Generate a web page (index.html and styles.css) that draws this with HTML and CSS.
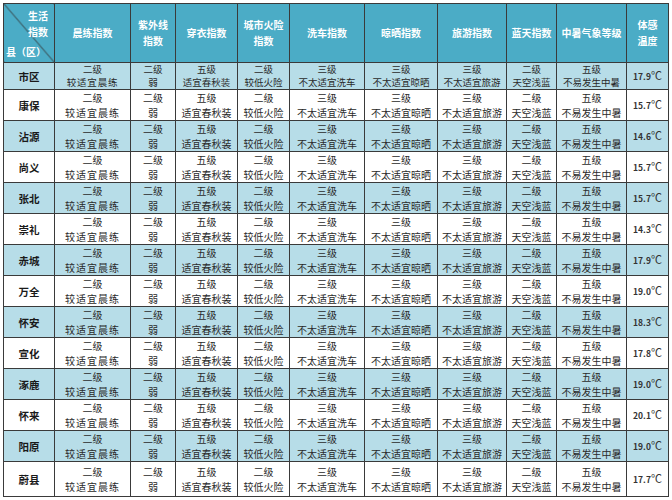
FILE: index.html
```html
<!DOCTYPE html>
<html lang="zh">
<head>
<meta charset="utf-8">
<title>生活指数</title>
<link rel="stylesheet" href="styles.css">
</head>
<body>
<table class="idx">
<colgroup>
<col class="c-name"><col class="c-cl"><col class="c-uv"><col class="c-cy"><col class="c-hx"><col class="c-xc"><col class="c-ls"><col class="c-ly"><col class="c-lt"><col class="c-zs"><col class="c-tg">
</colgroup>
<thead>
<tr class="head">
<th class="corner"><span class="corner-top">生活<br>指数</span><span class="corner-bot">县（区）</span></th>
<th>晨练指数</th>
<th>紫外线<br>指数</th>
<th>穿衣指数</th>
<th>城市火险<br>指数</th>
<th>洗车指数</th>
<th>晾晒指数</th>
<th>旅游指数</th>
<th>蓝天指数</th>
<th>中暑气象等级</th>
<th>体感<br>温度</th>
</tr>
</thead>
<tbody id="rows"></tbody>
</table>
<script src="app.js"></script>
</body>
</html>
```
FILE: styles.css
```css
html, body { margin: 0; padding: 0; background: #fff; }
body { padding: 3px 0 0 3px; font-family: "Noto Sans CJK SC", "Noto Sans", sans-serif; color: #2a2a2a; }
.idx { border-collapse: collapse; table-layout: fixed; width: 665px; }
.idx th, .idx td { border: 1px solid #3a3a3a; padding: 0; text-align: center; vertical-align: middle; }
.c-name { width: 51px; } .c-cl { width: 76px; } .c-uv { width: 45px; } .c-cy { width: 62px; }
.c-hx { width: 52px; } .c-xc { width: 75px; } .c-ls { width: 73px; } .c-ly { width: 69px; }
.c-lt { width: 50px; } .c-zs { width: 70px; } .c-tg { width: 42px; }
.head th { background: #4bacc6; color: #fff; font-weight: 700; font-size: 10px; line-height: 16px; height: 58px; }
.corner { position: relative; background: linear-gradient(to top right, #4bacc6 calc(50% - 0.7px), #333 50%, #4bacc6 calc(50% + 0.7px)) !important; }
.corner-top { position: absolute; right: 6px; top: 4px; text-align: right; }
.corner-bot { position: absolute; left: 2px; bottom: 2px; }
.idx td { font-size: 10px; line-height: 15px; height: 30px; }
.idx td .ln { display: block; }
.idx td.name { font-weight: 700; font-size: 10.5px; color: #1a1a1a; }
.idx tr.alt td { background: #b7dde8; }
.idx tr.first td { height: 26px; line-height: 13px; font-size: 9.5px; }
.idx tr.first td.name { font-size: 10.5px; }
.idx tr.last td { height: 34px; }
.idx td .wide { letter-spacing: 1px; }
.idx tr.first td .wide { letter-spacing: 0.8px; }
.idx td.temp { font-size: 8.5px; font-weight: 700; color: #333; }
.idx tr.first td.temp { font-size: 8.5px; }
.idx td.temp .deg { font-size: 11px; font-weight: 400; }
```
FILE: app.js
```js
var names = ["市区","康保","沾源","尚义","张北","崇礼","赤城","万全","怀安","宣化","涿鹿","怀来","阳原","蔚县"];
var temps = ["17.9","15.7","14.6","15.7","15.7","14.3","17.9","19.0","18.3","17.8","19.0","20.1","19.0","17.7"];
var cells = [["二级","<span class=\"wide\">较适宜晨练</span>"],["二级","弱"],["五级","适宜春秋装"],["二级","较低火险"],["三级","不太适宜洗车"],["三级","不太适宜晾晒"],["三级","不太适宜旅游"],["二级","天空浅蓝"],["五级","不易发生中暑"]];
var body = document.getElementById("rows");
var html = "";
for (var i = 0; i < names.length; i++) {
  var cls = [];
  if (i % 2 === 0) cls.push("alt");
  if (i === 0) cls.push("first");
  if (i === names.length - 1) cls.push("last");
  html += "<tr class=\"" + cls.join(" ") + "\"><td class=\"name\">" + names[i] + "</td>";
  for (var j = 0; j < cells.length; j++) {
    html += "<td><span class=\"ln\">" + cells[j][0] + "</span><span class=\"ln\">" + cells[j][1] + "</span></td>";
  }
  html += "<td class=\"temp\">" + temps[i] + "<span class=\"deg\">℃</span></td></tr>";
}
body.innerHTML = html;
```
